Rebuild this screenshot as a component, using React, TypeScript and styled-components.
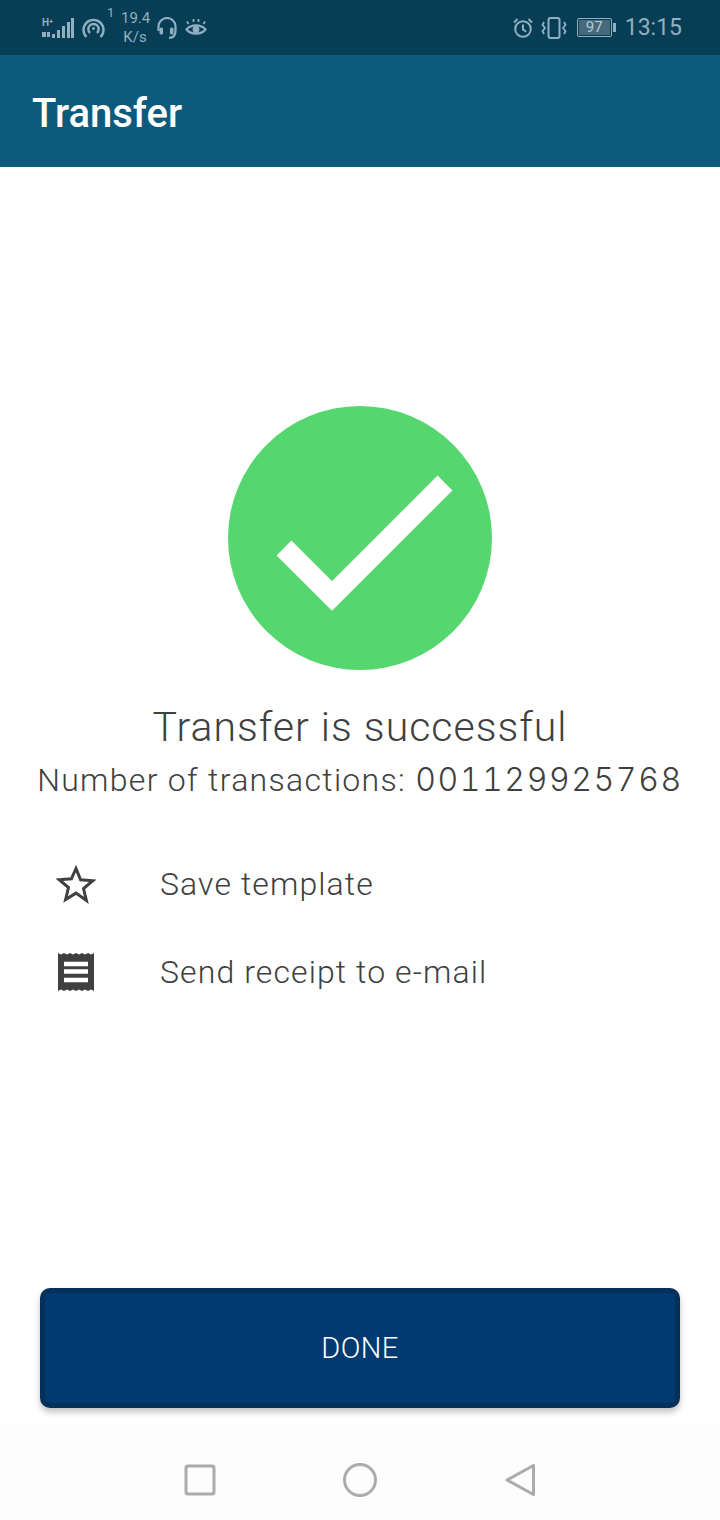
import React from "react";
import styled, { createGlobalStyle } from "styled-components";

const Global = createGlobalStyle`
  html, body { margin: 0; padding: 0; background: #fff; }
  * { box-sizing: border-box; }
`;

const Page = styled.div`
  width: 720px;
  height: 1520px;
  display: flex;
  flex-direction: column;
  background: #fff;
  overflow: hidden;
  font-family: Roboto, "Liberation Sans", sans-serif;
`;

const StatusBar = styled.div`
  height: 55px;
  background: #083d56;
  color: #8fb0c1;
  display: flex;
  justify-content: space-between;
  align-items: center;
  padding: 0 38px 0 41px;
`;

const StatusGroup = styled.div`
  display: flex;
  align-items: center;
  gap: 8px;
`;

const Speed = styled.div`
  width: 28px;
  text-align: center;
  font-size: 15px;
  line-height: 19px;
  white-space: nowrap;
`;

const Sup = styled.span`
  width: 6px;
  font-size: 13px;
  line-height: 13px;
  align-self: flex-start;
  margin: -3px 0 0 -6px;
`;

const Battery = styled.div`
  width: 35px;
  height: 19px;
  border: 1px solid #8fb0c1;
  border-radius: 2px;
  background: #47697c;
  background-clip: content-box;
  padding: 1px;
  color: #b4ccd8;
  font-size: 15px;
  line-height: 15px;
  text-align: center;
  position: relative;
  margin: 0 5px 0 2px;
  &::after {
    content: "";
    position: absolute;
    right: -5px;
    top: 4px;
    width: 3px;
    height: 9px;
    background: #8fb0c1;
  }
`;

const Clock = styled.span`
  font-size: 23px;
`;

const AppBar = styled.header`
  height: 112px;
  background: #0d5b7c;
  color: #fff;
  display: flex;
  align-items: center;
  padding: 4px 32px 0;
  font-size: 40px;
  font-weight: 500;
`;

const Content = styled.main`
  flex: 1;
  display: flex;
  flex-direction: column;
  align-items: center;
  padding-top: 239px;
`;

const SuccessBadge = styled.svg`
  width: 264px;
  height: 264px;
  display: block;
`;

const Title = styled.h1`
  margin: 32px 0 0;
  font-size: 41px;
  line-height: 50px;
  font-weight: 300;
  letter-spacing: 1px;
  color: #404040;
`;

const Subtitle = styled.p`
  margin: 6px 0 0;
  font-size: 32px;
  line-height: 44px;
  font-weight: 300;
  letter-spacing: 1.3px;
  color: #404040;
  white-space: nowrap;
`;

// the original face has wide digits, Inter is the closest of the installed ones
const TxNumber = styled.span`
  font-family: Inter, Roboto, sans-serif;
  font-variant-numeric: tabular-nums;
  letter-spacing: 1.6px;
`;

const Actions = styled.ul`
  list-style: none;
  align-self: stretch;
  margin: 38px 0 0;
  padding: 0 0 0 56px;
  display: flex;
  flex-direction: column;
`;

const Action = styled.li`
  height: 88px;
  display: flex;
  align-items: center;
  gap: 64px;
  font-size: 32px;
  font-weight: 300;
  letter-spacing: 1.1px;
  color: #404040;
`;

const ActionIcon = styled.svg`
  width: 40px;
  height: 40px;
  flex: none;
  margin-top: -1px;
`;

const Footer = styled.div`
  padding: 0 40px 16px;
  margin-top: auto;
`;

const DoneButton = styled.button`
  width: 640px;
  height: 120px;
  display: block;
  border: 5px solid #04305b;
  border-radius: 10px;
  background: #003a70;
  box-shadow: 0 4px 6px rgba(0, 0, 0, 0.25);
  color: #fff;
  font-family: inherit;
  font-size: 29px;
  font-weight: 300;
  letter-spacing: 0.4px;
`;

const NavBar = styled.nav`
  height: 96px;
  background: #fdfdfd;
  display: flex;
  justify-content: center;
  align-items: center;
  gap: 112px;
  padding-top: 16px;
`;

const NavIcon = styled.svg`
  width: 48px;
  height: 48px;
  fill: none;
  stroke: #ababab;
  stroke-width: 3;
`;

const tint = "#8fb0c1";

export default function App() {
  return (
    <>
      <Global />
      <Page>
        <StatusBar>
          <StatusGroup>
            <svg width="33" height="22" viewBox="0 0 33 22">
              <g fill={tint}>
                <rect x="11" y="17" width="3" height="4" />
                <rect x="16" y="13" width="3" height="8" />
                <rect x="21" y="9" width="3" height="12" />
                <rect x="26" y="5" width="3" height="16" />
                <rect x="30" y="1" width="3" height="20" />
                <rect x="1" y="15" width="4" height="5" />
                <rect x="6" y="15" width="3" height="5" />
              </g>
              <text x="1" y="9" fontSize="10" fontWeight="700" fill={tint} fontFamily="Roboto">
                H⁺
              </text>
            </svg>
            <svg width="23" height="21" viewBox="0 0 23 21" fill="none" stroke={tint} strokeWidth="2.4">
              <path d="M4.500 20a10 10 0 1 1 14 0" />
              <path d="M8 16a5.200 5.200 0 1 1 7 0" />
              <circle cx="11.500" cy="11.500" r="1.400" fill={tint} stroke="none" />
            </svg>
            <Sup>1</Sup>
            <Speed>
              19.4
              <br />
              K/s
            </Speed>
            <svg width="20" height="22" viewBox="0 0 20 22" fill="none" stroke={tint} strokeWidth="2.200">
              <path d="M1.500 14V9.500a8.500 8.500 0 0 1 17 0V14" />
              <path d="M18.500 14c0 4.500-2.500 6.800-6.500 6.800" />
              <rect x="2.500" y="10.500" width="3.500" height="7" rx="1.500" fill={tint} stroke="none" />
              <rect x="13" y="10.500" width="3.500" height="7" rx="1.500" fill={tint} stroke="none" />
            </svg>
            <svg width="22" height="19" viewBox="0 0 22 19" fill="none" stroke={tint} strokeWidth="2.200">
              <path d="M1.500 11.500c4.500-5.500 14.500-5.500 19 0-4.500 5.500-14.500 5.500-19 0z" />
              <circle cx="11" cy="11.500" r="3.400" fill={tint} stroke="none" />
              <path d="M3.500 6 2 3.500M8.500 4V1M13.500 4V1M18.500 6 20 3.500" strokeWidth="1.800" />
            </svg>
          </StatusGroup>
          <StatusGroup>
            <svg width="20" height="20" viewBox="0 0 20 20" fill="none" stroke={tint} strokeWidth="2">
              <circle cx="10" cy="11" r="7.800" />
              <path d="M10 6.500v5l3.200 2.300M1 4.500 4.500 1M19 4.500 15.500 1" />
            </svg>
            <svg width="26" height="22" viewBox="0 0 26 22" fill="none" stroke={tint} strokeWidth="2">
              <rect x="7.500" y="1" width="11" height="20" rx="2" />
              <path d="M3 5 1.500 8 4 11l-2.500 3L3 17M23 5l1.500 3L22 11l2.500 3L23 17" strokeWidth="1.800" />
            </svg>
            <Battery>97</Battery>
            <Clock>13:15</Clock>
          </StatusGroup>
        </StatusBar>
        <AppBar>Transfer</AppBar>
        <Content>
          <SuccessBadge viewBox="0 0 264 264">
            <circle cx="132" cy="132" r="132" fill="#56d66e" />
            <path d="M56 142l48 48L217 77" fill="none" stroke="#fff" strokeWidth="21" />
          </SuccessBadge>
          <Title>Transfer is successful</Title>
          <Subtitle>
            Number of transactions: <TxNumber>001129925768</TxNumber>
          </Subtitle>
          <Actions>
            <Action>
              <ActionIcon viewBox="0 0 40 40">
                <path
                  d="M20 4.500l4.600 11.300 12.200.9-9.300 7.900 2.900 11.900L20 29.100 9.600 35.500l2.900-11.900-9.300-7.900 12.200-.9z"
                  fill="none"
                  stroke="#404040"
                  strokeWidth="3"
                />
              </ActionIcon>
              Save template
            </Action>
            <Action>
              <ActionIcon viewBox="0 0 40 40">
                <path
                  d="M2 1l3 1.500L8 1l3 1.500L14 1l3 1.500L20 1l3 1.500L26 1l3 1.500L32 1l3 1.500L38 1v38l-3-1.500L32 39l-3-1.500L26 39l-3-1.500L20 39l-3-1.500L14 39l-3-1.500L8 39l-3-1.500L2 39z"
                  fill="#404040"
                />
                <path d="M8 12h24M8 19.500h24M8 28h24" stroke="#fff" strokeWidth="4.500" />
              </ActionIcon>
              Send receipt to e-mail
            </Action>
          </Actions>
          <Footer>
            <DoneButton>DONE</DoneButton>
          </Footer>
        </Content>
        <NavBar>
          <NavIcon viewBox="0 0 48 48">
            <rect x="10" y="10" width="28" height="28" rx="2" />
          </NavIcon>
          <NavIcon viewBox="0 0 48 48">
            <circle cx="24" cy="24" r="15.500" />
          </NavIcon>
          <NavIcon viewBox="0 0 48 48">
            <path d="M37.500 9.500v29L11 24z" strokeLinejoin="round" />
          </NavIcon>
        </NavBar>
      </Page>
    </>
  );
}
